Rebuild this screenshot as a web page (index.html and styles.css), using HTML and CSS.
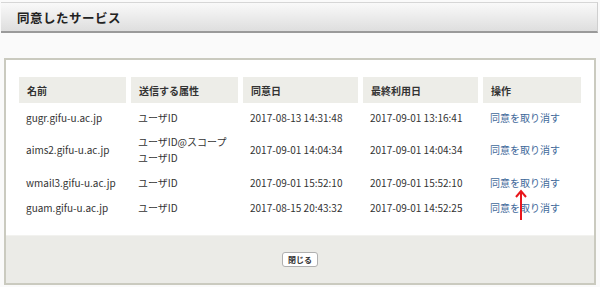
FILE: index.html
```html
<!DOCTYPE html>
<html lang="ja">
<head>
    <meta charset="UTF-8">
    <title>同意したサービス</title>
    <link rel="stylesheet" href="styles.css">
</head>
<body>

<div class="titlebar">
    <h1>同意したサービス</h1>
</div>

<div class="panel">
    <div class="panel-body">
        <table class="consents">
            <thead>
            <tr>
                <th class="c-name">名前</th>
                <th class="c-attr">送信する属性</th>
                <th class="c-date">同意日</th>
                <th class="c-date">最終利用日</th>
                <th class="c-op">操作</th>
            </tr>
            </thead>
            <tbody>
            <tr>
                <td>gugr.gifu-u.ac.jp</td>
                <td>ユーザID</td>
                <td>2017-08-13 14:31:48</td>
                <td>2017-09-01 13:16:41</td>
                <td><a href="#">同意を取り消す</a></td>
            </tr>
            <tr>
                <td>aims2.gifu-u.ac.jp</td>
                <td>ユーザID@スコープ<br>ユーザID</td>
                <td>2017-09-01 14:04:34</td>
                <td>2017-09-01 14:04:34</td>
                <td><a href="#">同意を取り消す</a></td>
            </tr>
            <tr>
                <td>wmail3.gifu-u.ac.jp</td>
                <td>ユーザID</td>
                <td>2017-09-01 15:52:10</td>
                <td>2017-09-01 15:52:10</td>
                <td><a href="#">同意を取り消す</a></td>
            </tr>
            <tr>
                <td>guam.gifu-u.ac.jp</td>
                <td>ユーザID</td>
                <td>2017-08-15 20:43:32</td>
                <td>2017-09-01 14:52:25</td>
                <td><a href="#">同意を取り消す</a></td>
            </tr>
            </tbody>
        </table>
    </div>
    <div class="panel-footer">
        <button type="button" class="close-btn">閉じる</button>
    </div>
</div>

<!-- annotation arrow pointing at the revoke link -->
<svg class="pointer" width="14" height="32" viewBox="0 0 14 32">
    <path d="M7 2 V31" stroke="#e8161b" stroke-width="2" fill="none"/>
    <path d="M2 8 L7 2 L12 8" stroke="#e8161b" stroke-width="2" fill="none"/>
</svg>

</body>
</html>
```

FILE: styles.css
```css
body {
    margin: 0;
    background: #fafafa;
    font-family: "Noto Sans CJK JP", "Liberation Sans", sans-serif;
    color: #333;
    position: relative;
    height: 287px;
    overflow: hidden;
}

.titlebar {
    margin: 2px 2px 0 1px;
    height: 28px;
    background: linear-gradient(#f9f9f9, #dedede);
    border-top: 1px solid #d6d6d6;
    border-right: 1px solid #cfcfcf;
    border-bottom: 2px solid #9a9a9a;
    display: flex;
    align-items: center;
}

.titlebar h1 {
    margin: 0 0 0 16px;
    font-size: 12.5px;
    font-weight: bold;
    color: #222;
    letter-spacing: 0.5px;
}

.panel {
    margin: 25px 4px 0 4px;
    border: 2px solid #cacabf;
    background: #fff;
}

.panel-body {
    padding: 17px 13px 15px 13px;
}

.consents {
    border-collapse: separate;
    border-spacing: 5px 0;
    margin-left: -5px;
    font-size: 10px;
    table-layout: fixed;
    width: 572px;
}

.consents th {
    box-sizing: border-box;
    background: #edede8;
    text-align: left;
    font-weight: bold;
    height: 26px;
    padding: 0 8px;
    color: #333;
}

.consents td {
    padding: 4px 7px;
    line-height: 16px;
    height: 17px;
    white-space: nowrap;
}

.consents tbody tr:first-child td {
    padding-top: 6px;
}

.c-name { width: 107px; }
.c-attr { width: 107px; }
.c-date { width: 115px; }
.c-op { width: 98px; }

.consents a {
    color: #41699a;
    text-decoration: none;
}

.panel-footer {
    background: #ebebe7;
    height: 47px;
    border-top: 1px solid #f2f2ef;
    display: flex;
    justify-content: center;
    align-items: center;
}

.close-btn {
    font-family: "Noto Sans CJK JP", sans-serif;
    font-size: 8px;
    font-weight: bold;
    color: #333;
    background: #fff;
    border: 1px solid #b0b0b0;
    border-radius: 3px;
    padding: 1px 5px;
    line-height: 11px;
}

.pointer {
    position: absolute;
    left: 514px;
    top: 189px;
}
```
